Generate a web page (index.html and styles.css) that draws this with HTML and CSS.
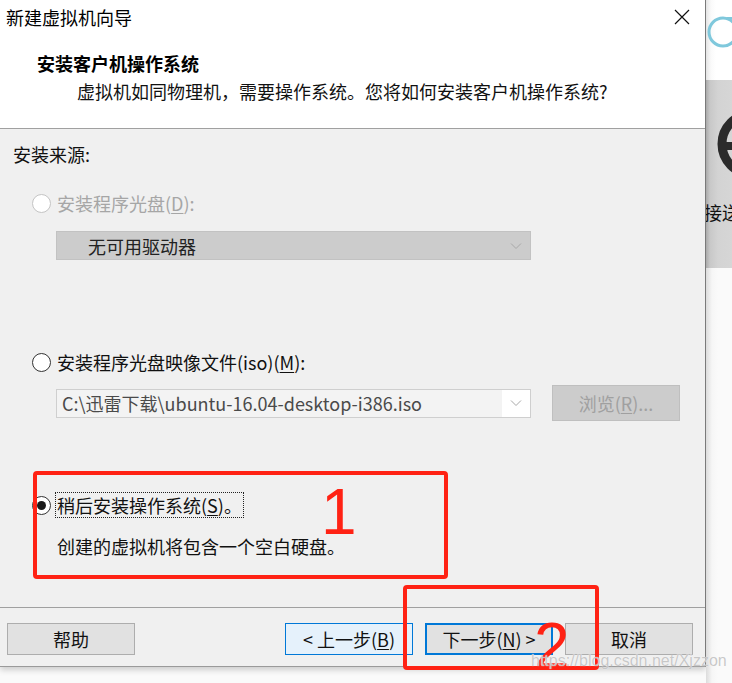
FILE: index.html
```html
<!DOCTYPE html>
<html lang="zh-CN">
<head>
<meta charset="utf-8">
<title>新建虚拟机向导</title>
<link rel="stylesheet" href="styles.css">
</head>
<body>
<div class="screen">
  <div class="dialog">
    <div class="titlebar">
      <span class="title">新建虚拟机向导</span>
      <svg class="close" width="16" height="16" viewBox="0 0 16 16"><path d="M1 1 L15 15 M15 1 L1 15" stroke="#111" stroke-width="1.2" fill="none"/></svg>
    </div>
    <div class="header">
      <div class="h-title">安装客户机操作系统</div>
      <div class="h-sub">虚拟机如同物理机，需要操作系统。您将如何安装客户机操作系统?</div>
    </div>
    <div class="content">
      <div class="section-label">安装来源:</div>
      <div class="radio-row disabled row1">
        <span class="radio"></span>
        <span class="rlabel">安装程序光盘(<u>D</u>):</span>
      </div>
      <div class="select disabled-select">
        <span class="sel-text">无可用驱动器</span>
        <svg class="chev" width="12" height="8" viewBox="0 0 12 8"><path d="M1 1.5 L6 6.5 L11 1.5" stroke="#a8a8a8" stroke-width="1" fill="none"/></svg>
      </div>
      <div class="radio-row row2">
        <span class="radio"></span>
        <span class="rlabel">安装程序光盘映像文件(iso)(<u>M</u>):</span>
      </div>
      <div class="combo-row">
        <div class="combo">
          <span class="combo-text">C:\迅雷下载\ubuntu-16.04-desktop-i386.iso</span>
          <span class="combo-arrow">
            <svg width="12" height="8" viewBox="0 0 12 8"><path d="M1 1.5 L6 6.5 L11 1.5" stroke="#a8a8a8" stroke-width="1" fill="none"/></svg>
          </span>
        </div>
        <div class="browse">浏览(<u>R</u>)...</div>
      </div>
      <div class="radio-row row3">
        <span class="radio checked"></span>
        <span class="rlabel focus">稍后安装操作系统(<u>S</u>)。</span>
      </div>
      <div class="desc">创建的虚拟机将包含一个空白硬盘。</div>
    </div>
    <div class="footer">
      <div class="btn">帮助</div>
      <div class="spacer"></div>
      <div class="btn btn-hover">&lt; 上一步(<u>B</u>)</div>
      <div class="btn btn-default">下一步(<u>N</u>) &gt;</div>
      <div class="btn">取消</div>
    </div>
  </div>
  <div class="side">
    <div class="side-top">
      <svg class="side-svg" width="26" height="80" viewBox="0 0 26 80"><circle cx="17" cy="32" r="14" stroke="#7fc8dc" stroke-width="3" fill="none"/><path d="M21 18 H26" stroke="#7fc8dc" stroke-width="2"/></svg>
    </div>
    <div class="side-grey">
      <svg class="side-svg" width="26" height="110" viewBox="0 0 26 110"><circle cx="46" cy="64" r="30" stroke="#2b2b2b" stroke-width="9" fill="none"/><path d="M20 66 H26" stroke="#2b2b2b" stroke-width="8"/></svg>
      <div class="side-text">接送</div>
    </div>
    <div class="side-bottom"></div>
  </div>

  <div class="mark mark1"></div>
  <div class="digit digit1">1</div>
  <div class="mark mark2"></div>
  <div class="digit digit2">2</div>
  <div class="watermark">https://blog.csdn.net/Xjzzon</div>
</div>
</body>
</html>
```

FILE: styles.css
```css
* { box-sizing: border-box; }
html, body { margin: 0; padding: 0; background: #ffffff; }
body {
  font-family: "Noto Sans CJK SC", "Noto Sans", sans-serif;
  font-size: 18px;
  color: #111;
}
u { text-decoration: underline; text-underline-offset: 2px; }

.screen {
  position: relative;
  width: 732px;
  height: 683px;
  overflow: hidden;
  display: flex;
  align-items: flex-start;
  background: #fafafa;
}

.dialog {
  width: 706px;
  height: 667px;
  flex: none;
  display: flex;
  flex-direction: column;
  border-right: 1px solid #7a7a7a;
  border-bottom: 1px solid #9a9a9a;
  box-shadow: 0 3px 6px rgba(0,0,0,0.18);
  background: #f0f0f0;
}

.titlebar {
  height: 36px;
  background: #fff;
  display: flex;
  align-items: flex-start;
  justify-content: space-between;
  padding: 5px 0 0 6px;
}
.titlebar .title { line-height: 24px; color: #000; }
.close { margin: 4px 15px 0 0; }

.header {
  height: 93px;
  background: #fff;
  border-bottom: 1px solid #a0a0a0;
  padding: 15px 0 0 37px;
}
.h-title { font-weight: 700; line-height: 24px; color: #000; }
.h-sub { margin: 4px 0 0 40px; line-height: 24px; color: #111; }

.content {
  height: 478px;
  padding: 13px 0 0 13px;
  display: flex;
  flex-direction: column;
}
.section-label { line-height: 24px; }

.radio-row {
  display: flex;
  align-items: center;
  gap: 6px;
  height: 24px;
  margin-left: 19px;
}
.row1 { margin-top: 25px; }
.row2 { margin-top: 90px; }
.row3 { margin-top: 72px; }
.rlabel { line-height: 24px; }
.disabled .rlabel { color: #a6a6a6; }

.radio {
  width: 19px;
  height: 19px;
  border-radius: 50%;
  border: 1px solid #333;
  background: #fff;
  flex: none;
  display: flex;
  align-items: center;
  justify-content: center;
}
.disabled .radio { border-color: #c4c4c4; }
.radio.checked::after {
  content: "";
  width: 9px;
  height: 9px;
  border-radius: 50%;
  background: #1a1a1a;
}
.focus {
  outline: 1px dotted #222;
  outline-offset: 0;
  padding: 0 1px;
  margin-left: -1px;
}

.select {
  margin: 16px 0 0 43px;
  width: 475px;
  height: 29px;
  display: flex;
  align-items: center;
  justify-content: space-between;
}
.disabled-select {
  background: #cccccc;
  border: 1px solid #c2c2c2;
  padding: 0 8px 0 31px;
}
.sel-text { color: #222; line-height: 24px; }

.combo-row {
  margin: 11px 0 0 43px;
  display: flex;
  align-items: center;
  height: 36px;
}
.combo {
  width: 475px;
  height: 29px;
  border: 1px solid #cfcfcf;
  background: #fff;
  display: flex;
  align-items: stretch;
}
.combo-text {
  width: 445px;
  background: #f3f3f3;
  color: #4a4a4a;
  line-height: 27px;
  padding-left: 5px;
  white-space: nowrap;
  overflow: hidden;
}
.combo-arrow {
  flex: 1;
  display: flex;
  align-items: center;
  justify-content: center;
}
.browse {
  margin-left: 21px;
  width: 128px;
  height: 36px;
  background: #cccccc;
  border: 1px solid #bfbfbf;
  color: #a0a0a0;
  display: flex;
  align-items: center;
  justify-content: center;
}

.desc { margin: 17px 0 0 44px; line-height: 24px; }

.footer {
  flex: 1;
  border-top: 1px solid #a0a0a0;
  display: flex;
  align-items: flex-start;
  gap: 12px;
  padding: 15px 12px 0 7px;
}
.spacer { flex: 1; }
.btn {
  width: 128px;
  height: 32px;
  background: #e1e1e1;
  border: 1px solid #adadad;
  display: flex;
  align-items: center;
  justify-content: center;
  color: #111;
  line-height: 24px;
  flex: none;
}
.btn-hover { background: #e5f1fb; border-color: #0078d7; }
.btn-default { border: 2px solid #0078d7; }

.side {
  flex: 1;
  height: 683px;
  display: flex;
  flex-direction: column;
  position: relative;
}
.side-top {
  height: 80px;
  background: linear-gradient(to right, #e4e4e4 0, #fafafa 5px, #ffffff 10px);
}
.side-grey {
  height: 188px;
  background: linear-gradient(to right, #aaaaaa 0, #c8c8c8 4px, #d3d3d3 12px, #d6d6d6 100%);
  position: relative;
  overflow: hidden;
}
.side-svg { display: block; }
.side-grey .side-svg { position: absolute; left: 0; top: 0; }
.side-text {
  position: absolute;
  left: -2px;
  top: 120px;
  line-height: 24px;
  color: #111;
  white-space: nowrap;
}
.side-bottom {
  flex: 1;
  background: linear-gradient(to right, #dcdcdc 0, #f6f6f6 6px, #fafafa 12px);
}

.mark {
  position: absolute;
  border: 4px solid #ff2214;
  border-radius: 4px;
}
.mark1 { left: 33px; top: 471px; width: 415px; height: 108px; }
.mark2 { left: 403px; top: 585px; width: 196px; height: 85px; }
.digit {
  position: absolute;
  font-family: "Liberation Sans", Arial, sans-serif;
  font-size: 64px;
  line-height: 64px;
  color: #ff2214;
}
.digit1 { left: 321px; top: 480px; }
.digit2 { left: 534px; top: 614px; }

.watermark {
  position: absolute;
  left: 531px;
  top: 651px;
  font-family: "Liberation Sans", Arial, sans-serif;
  font-size: 16px;
  line-height: 20px;
  color: rgba(190,190,190,0.85);
  text-shadow: 0 0 1px #ffffff;
  white-space: nowrap;
}
```
